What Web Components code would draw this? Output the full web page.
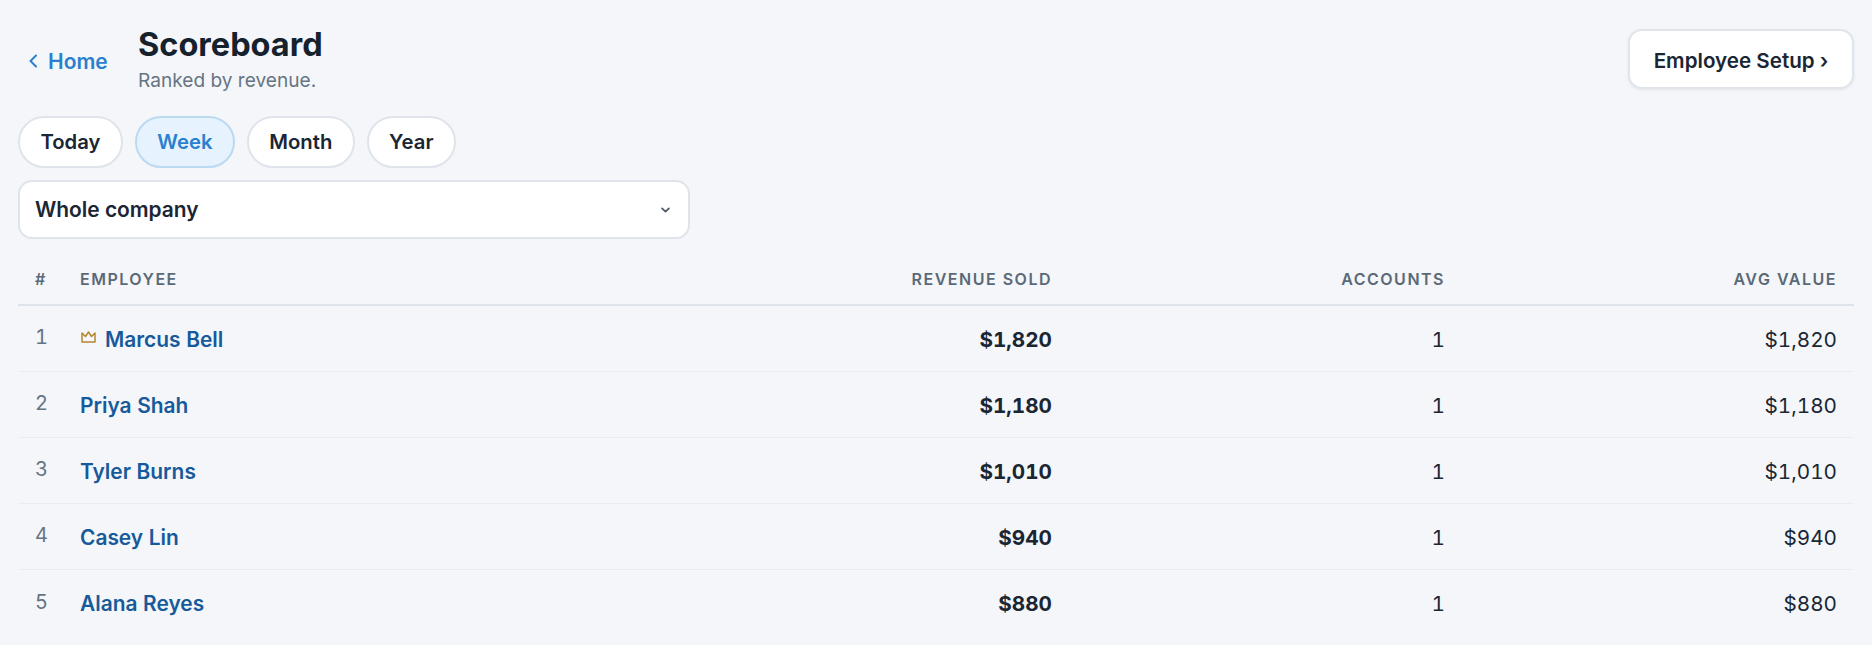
<!DOCTYPE html>
<html lang="en">
<head>
<meta charset="utf-8">
<title>Scoreboard</title>
<style>
  html, body { margin: 0; height: 100%; overflow: hidden; background: #f4f6fa; }
  body { font-family: Inter, "Liberation Sans", sans-serif; color: #1a2633; }
</style>
</head>
<body>
<score-page>
  <score-header slot="header" title="Scoreboard" subtitle="Ranked by revenue."></score-header>
  <range-pills slot="filters" options="Today,Week,Month,Year" active="Week"></range-pills>
  <company-select slot="filters" value="Whole company"></company-select>
  <score-table slot="table"></score-table>
</score-page>

<script>
// Page shell
class ScorePage extends HTMLElement {
  constructor() {
    super();
    this.attachShadow({ mode: 'open' });
    this.shadowRoot.innerHTML = `
      <style>
        :host { display: block; padding: 29px 18px 0 18px; }
        .filters { display: flex; flex-direction: column; align-items: flex-start; gap: 12.500px; margin-top: 26.500px; }
        .table { margin-top: 18px; }
      </style>
      <slot name="header"></slot>
      <div class="filters"><slot name="filters"></slot></div>
      <div class="table"><slot name="table"></slot></div>
    `;
  }
}

class ScoreHeader extends HTMLElement {
  constructor() {
    super();
    this.attachShadow({ mode: 'open' });
  }

  connectedCallback() {
    this.shadowRoot.innerHTML = `
      <style>
        :host { display: flex; align-items: flex-start; justify-content: space-between; height: 60px; }
        .left { display: flex; align-items: flex-start; }
        a { display: flex; align-items: center; gap: 11px; width: 109px; margin-left: 11px; margin-top: 20px; height: 24px;
            color: #2a7fce; font-size: 21px; font-weight: 600; text-decoration: none; }
        svg { display: block; }
        h1 { margin: -6px 0 0; font-size: 32.500px; line-height: 44px; font-weight: 700; color: #15222e; }
        p { margin: 1px 0 0; font-size: 19.100px; line-height: 24px; color: #667481; }
        button { box-sizing: border-box; width: 226px; height: 60px; border: 2px solid #e0e5ec; border-radius: 14px; background: #fff;
                 font: 600 20.600px Inter, "Liberation Sans", sans-serif; color: #1a2633; box-shadow: 0 1px 3px rgba(20,33,44,.08); padding: 3px 0 0; }
      </style>
      <div class="left">
        <a href="#">
          <svg width="8" height="14" viewBox="0 0 8 14" fill="none" stroke="#2a7fce" stroke-width="2" stroke-linecap="round" stroke-linejoin="round"><path d="M7 1.500 1.500 7 7 12.500"/></svg>
          Home
        </a>
        <div>
          <h1>${this.getAttribute('title')}</h1>
          <p>${this.getAttribute('subtitle')}</p>
        </div>
      </div>
      <button>Employee Setup ›</button>
    `;
  }
}

class RangePills extends HTMLElement {
  constructor() {
    super();
    this.attachShadow({ mode: 'open' });
  }

  connectedCallback() {
    const active = this.getAttribute('active');
    const pills = this.getAttribute('options').split(',').map(name =>
      `<button class="${name === active ? 'on' : ''}">${name}</button>`
    ).join('');
    this.shadowRoot.innerHTML = `
      <style>
        :host { display: flex; gap: 12px; }
        button { box-sizing: border-box; height: 52px; padding: 0 20.400px; border: 2px solid #dfe4eb; border-radius: 26px; background: #fff;
                 font: 600 20.300px Inter, "Liberation Sans", sans-serif; color: #1a2633; }
        .on { background: #e6f2fd; border-color: #bcd9f2; color: #2a7fce; }
      </style>
      ${pills}
    `;
  }
}

class CompanySelect extends HTMLElement {
  constructor() {
    super();
    this.attachShadow({ mode: 'open' });
  }

  connectedCallback() {
    this.shadowRoot.innerHTML = `
      <style>
        :host { display: flex; align-items: center; justify-content: space-between; box-sizing: border-box;
                width: 672px; height: 58.500px; padding: 1px 18px 0 15px; background: #fff; border: 2px solid #dfe4eb; border-radius: 14px;
                font-size: 20.900px; font-weight: 600; color: #1a2633; }
        svg { display: block; }
      </style>
      <span>${this.getAttribute('value')}</span>
      <svg width="9" height="6" viewBox="0 0 10 7" fill="none" stroke="#4c5965" stroke-width="2" stroke-linecap="round" stroke-linejoin="round"><path d="M1 1.500 5 5.500 9 1.500"/></svg>
    `;
  }
}

class ScoreTable extends HTMLElement {
  constructor() {
    super();
    this.attachShadow({ mode: 'open' });
    this._rows = [
      ['Marcus Bell', '$1,820', '1', '$1,820'],
      ['Priya Shah', '$1,180', '1', '$1,180'],
      ['Tyler Burns', '$1,010', '1', '$1,010'],
      ['Casey Lin', '$940', '1', '$940'],
      ['Alana Reyes', '$880', '1', '$880']
    ];
  }

  connectedCallback() {
    const crown = `<svg width="15" height="12" viewBox="0 0 15 12" fill="none" stroke="#b5872f" stroke-width="1.500" stroke-linejoin="round"><path d="M1 2 4.500 5.500 7.500 1 10.500 5.500 14 2V11H1Z"/></svg>`;
    const rows = this._rows.map((row, i) => `
      <div class="row">
        <span class="rank">${i + 1}</span>
        <span class="name">${i === 0 ? crown : ''}${row[0]}</span>
        <span class="rev">${row[1]}</span>
        <span class="num">${row[2]}</span>
        <span class="num">${row[3]}</span>
      </div>`).join('');
    this.shadowRoot.innerHTML = `
      <style>
        :host { display: block; }
        .row, .head { display: grid; grid-template-columns: 45px 1fr 200px 393px 392px; padding: 0 17px; align-items: center; }
        .row { height: 66px; padding-top: 2px; border-bottom: 1px solid #e9edf1; font-size: 20.700px; color: #1a2633; box-sizing: border-box; font-variant-numeric: tabular-nums; }
        .row:last-child { border-bottom: 0; }
        .head { height: 49px; padding-bottom: 3px; border-bottom: 2px solid #dfe4eb; box-sizing: border-box; font-size: 16px; font-weight: 600; letter-spacing: 1.500px; color: #5b6977; }
        .head span:nth-child(n+3), .rev, .num { text-align: right; }
        .rank { color: #667481; font-size: 20px; margin-top: -4px; }
        .name { display: flex; align-items: center; gap: 9px; font-size: 20.900px; font-weight: 600; color: #175a9b; }
        .name svg { margin: -4px 0 0 1px; }
        .rev { font-weight: 700; }
      </style>
      <div class="head">
        <span>#</span><span>EMPLOYEE</span><span>REVENUE SOLD</span><span>ACCOUNTS</span><span>AVG VALUE</span>
      </div>
      ${rows}
    `;
  }
}

customElements.define('score-page', ScorePage);
customElements.define('score-header', ScoreHeader);
customElements.define('range-pills', RangePills);
customElements.define('company-select', CompanySelect);
customElements.define('score-table', ScoreTable);
</script>
</body>
</html>
